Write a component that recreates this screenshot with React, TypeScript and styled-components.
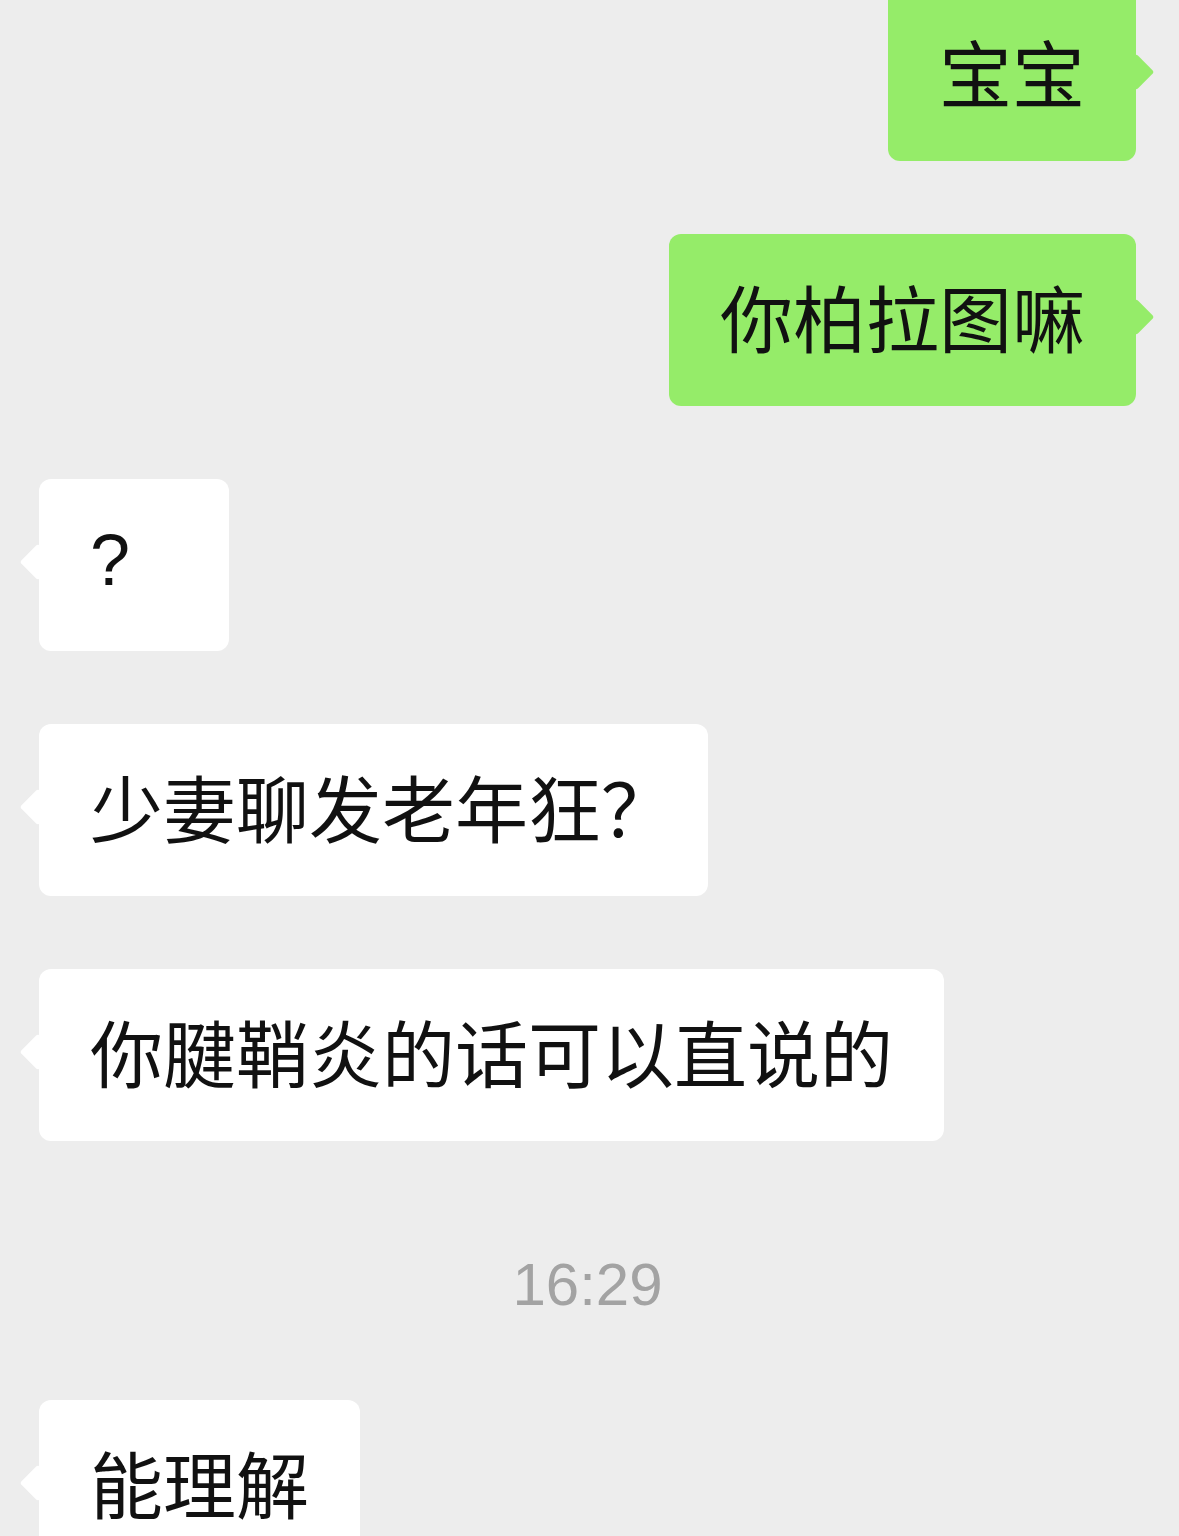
import React from 'react';
import styled, { createGlobalStyle, css } from 'styled-components';

type Side = 'left' | 'right';

const GlobalStyle = createGlobalStyle`
  html, body {
    margin: 0;
    padding: 0;
    background: #ededed;
  }
`;

const Page = styled.div`
  width: 1179px;
  height: 1536px;
  overflow: hidden;
  box-sizing: border-box;
  padding: 0 43px 0 39px;
  display: flex;
  flex-direction: column;
  gap: 73px;
  background: #ededed;
  font-family: 'Noto Sans CJK SC', 'Noto Sans', sans-serif;
`;

const Row = styled.div<{ $side: Side; $first?: boolean }>`
  display: flex;
  justify-content: ${(p) => (p.$side === 'right' ? 'flex-end' : 'flex-start')};
  margin-top: ${(p) => (p.$first ? '-11px' : '0')};
`;

// $trail: right padding, trimmed where the text ends in a full-width mark
const Bubble = styled.div<{ $side: Side; $trail?: number }>`
  position: relative;
  box-sizing: border-box;
  display: flex;
  align-items: center;
  height: 172px;
  min-width: 190px;
  padding: 0 ${(p) => p.$trail ?? 51}px 10px 51px;
  border-radius: 12px;
  font-size: 73px;
  line-height: 1;
  color: #111111;
  white-space: nowrap;
  background: ${(p) => (p.$side === 'right' ? '#95ec69' : '#ffffff')};

  &::after {
    content: '';
    position: absolute;
    top: 70px;
    width: 26px;
    height: 26px;
    border-radius: 3px;
    transform: rotate(45deg);
    background: inherit;
    ${(p) =>
      p.$side === 'right'
        ? css`
            right: -13px;
          `
        : css`
            left: -14px;
          `}
  }
`;

const Mark = styled.span`
  font-family: 'Liberation Sans', Arial, sans-serif;
  font-size: 72px;
`;

const Stamp = styled.div`
  margin: 41px 0 12px;
  text-align: center;
  font-family: 'Liberation Sans', Arial, sans-serif;
  font-size: 60px;
  line-height: 60px;
  color: #a3a3a3;
`;

const App: React.FC = () => {
  return (
    <>
      <GlobalStyle />
      <Page>
        <Row $side="right" $first>
          <Bubble $side="right">宝宝</Bubble>
        </Row>
        <Row $side="right">
          <Bubble $side="right">你柏拉图嘛</Bubble>
        </Row>
        <Row $side="left">
          <Bubble $side="left">
            <Mark>?</Mark>
          </Bubble>
        </Row>
        <Row $side="left">
          <Bubble $side="left" $trail={34}>少妻聊发老年狂？</Bubble>
        </Row>
        <Row $side="left">
          <Bubble $side="left">你腱鞘炎的话可以直说的</Bubble>
        </Row>
        <Stamp>16:29</Stamp>
        <Row $side="left">
          <Bubble $side="left">能理解</Bubble>
        </Row>
      </Page>
    </>
  );
};

export default App;
